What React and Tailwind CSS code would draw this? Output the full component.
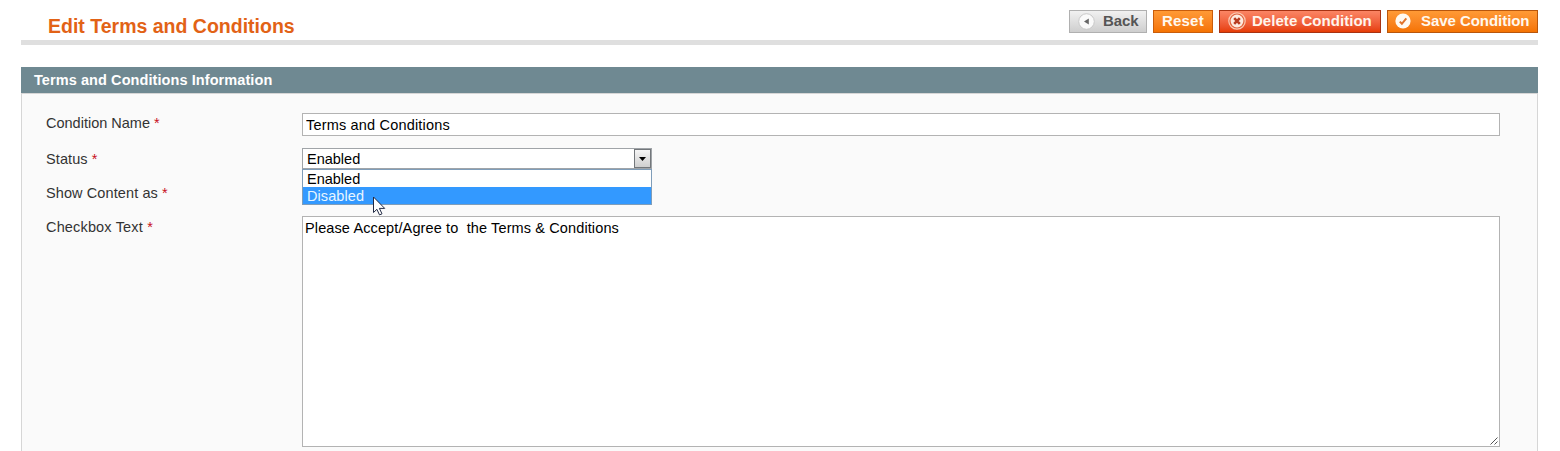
import React from "react";

function Button({ className, icon, children }) {
  return (
    <button type="button" className={`flex h-[23px] items-center border pb-px text-[15px] leading-[20px] font-bold whitespace-nowrap ${className}`}>
      {icon}
      {children}
    </button>
  );
}

function BackIcon() {
  return (
    <svg className="mr-[8px] size-[17px] shrink-0" viewBox="0 0 17 17">
      <circle cx="8.5" cy="8.5" r="7.8" fill="#fafafa" stroke="#c9c9c9" />
      <path d="M10.8 5.6v6L6 8.6z" fill="#666" />
    </svg>
  );
}

function DeleteIcon() {
  return (
    <svg className="mr-[6px] size-[18px] shrink-0" viewBox="0 0 18 18">
      <circle cx="9" cy="9" r="8.2" fill="#e0623c" stroke="#fbc9b2" strokeWidth="1.2" />
      <circle cx="9" cy="9" r="6.4" fill="#fdeadf" />
      <path d="M6.2 6.2l5.6 5.6M11.8 6.2l-5.6 5.6" stroke="#b83c20" strokeWidth="2.6" />
    </svg>
  );
}

function SaveIcon() {
  return (
    <svg className="mr-[10px] size-[16px] shrink-0" viewBox="0 0 16 16">
      <circle cx="8" cy="8" r="7.6" fill="#fffaf2" />
      <path d="M4.8 8.6l2.1 2.2 4.4-5.4" fill="none" stroke="#e0742c" strokeWidth="2" />
    </svg>
  );
}

function Label({ children, className }) {
  return (
    <div className={`w-[256px] shrink-0 text-[14.5px] leading-[18px] text-[#333] ${className}`}>
      {children} <span className="text-[#c8101c]">*</span>
    </div>
  );
}

function StatusSelect() {
  return (
    <div className="relative h-[21px] w-[350px] text-[14.5px] text-black">
      <div className="flex h-[21px] items-center justify-between border border-[#a0a4a8] bg-white pl-[4px] leading-[19px]">
        <span className="pt-[2px]">Enabled</span>
        <span className="flex h-[19px] w-[17px] items-center justify-center border border-[#73777b] bg-linear-to-b from-[#f5f5f5] to-[#cfcfcf]">
          <svg className="h-[4px] w-[7px]" viewBox="0 0 7 4">
            <path d="M0 0h7L3.5 4z" fill="#000" />
          </svg>
        </span>
      </div>
      <ul className="absolute top-[21px] left-0 z-10 h-[36px] w-[350px] border border-[#7f9db9] bg-white leading-[19px]">
        <li className="h-[17px] pl-[4px]">Enabled</li>
        <li className="h-[17px] bg-[#3399ff] pl-[4px] tracking-[0.08px] text-[#e8f6ff]">Disabled</li>
      </ul>
      <svg className="absolute top-[48px] left-[71px] z-20 h-[20px] w-[13px]" viewBox="0 0 13 20">
        <path d="M.5 1v15.5l3.4-3.2 2.6 5.6 2.5-1.1-2.6-5.4h5.3z" fill="#fff" stroke="#222a44" />
      </svg>
    </div>
  );
}

export default function App() {
  return (
    <div className="h-[451px] overflow-hidden bg-white pr-[22px] pl-[21px] font-['Liberation_Sans',Arial,sans-serif]">
      <header className="flex h-[45px] items-start justify-between border-b-[5px] border-[#dfdfdf] pl-[27px]">
        <h1 className="pt-[14px] text-[19.5px] leading-[24px] font-bold whitespace-nowrap text-[#e26216]">Edit Terms and Conditions</h1>
        <div className="flex gap-[6px] pt-[10px]">
          <Button className="w-[78px] border-[#b0b0b0] bg-linear-to-b from-[#f1f1f1] to-[#cecece] pl-[8px] tracking-[-0.1px] text-[#555]" icon={<BackIcon />}>Back</Button>
          <Button className="w-[60px] border-[#c95d0b] bg-linear-to-b from-[#ff9a35] to-[#f57300] pl-[8px] tracking-[0.2px] text-[#fff8ee]">Reset</Button>
          <Button className="w-[162px] border-[#a83212] bg-linear-to-b from-[#fb8564] to-[#e63c00] pl-[8px] tracking-[0.04px] text-[#fff4ec]" icon={<DeleteIcon />}>Delete Condition</Button>
          <Button className="w-[151px] border-[#b8560c] bg-linear-to-b from-[#ff9a35] to-[#f57300] pl-[7px] tracking-[-0.05px] text-[#fff8ee]" icon={<SaveIcon />}>Save Condition</Button>
        </div>
      </header>
      <section className="mt-[22px]">
        <h2 className="h-[26px] bg-[#6f8992] pl-[13px] text-[14.5px] leading-[26px] font-bold tracking-[0.08px] text-white">Terms and Conditions Information</h2>
        <div className="h-[380px] border-x border-t border-[#d6d6d6] bg-[#fafafa] pt-[19px] pl-[24px]">
          <div className="flex h-[35px]">
            <Label className="pt-px">Condition Name</Label>
            <input className="h-[23px] w-[1198px] border border-[#b3b3b3] bg-white px-[3px] text-[14.5px] tracking-[0.18px] text-black outline-none" defaultValue="Terms and Conditions" />
          </div>
          <div className="flex h-[34px]">
            <Label className="pt-[2px] tracking-[0.1px]">Status</Label>
            <StatusSelect />
          </div>
          <div className="flex h-[34px]">
            <Label className="pt-[2px] tracking-[0.1px]">Show Content as</Label>
          </div>
          <div className="flex">
            <Label className="pt-[2px] tracking-[0.16px]">Checkbox Text</Label>
            <div className="relative h-[231px] w-[1198px]">
              <textarea className="block h-full w-full resize-none border border-[#b3b3b3] bg-white px-[2px] py-[2px] text-[14.5px] leading-[18px] tracking-[0.12px] text-black outline-none" defaultValue="Please Accept/Agree to  the Terms &amp; Conditions" />
              <svg className="absolute right-[2px] bottom-[2px] size-[8px]" viewBox="0 0 8 8">
                <path d="M.5 7.5l7-7M4.5 7.5l3-3" stroke="#555" fill="none" />
              </svg>
            </div>
          </div>
        </div>
      </section>
    </div>
  );
}
